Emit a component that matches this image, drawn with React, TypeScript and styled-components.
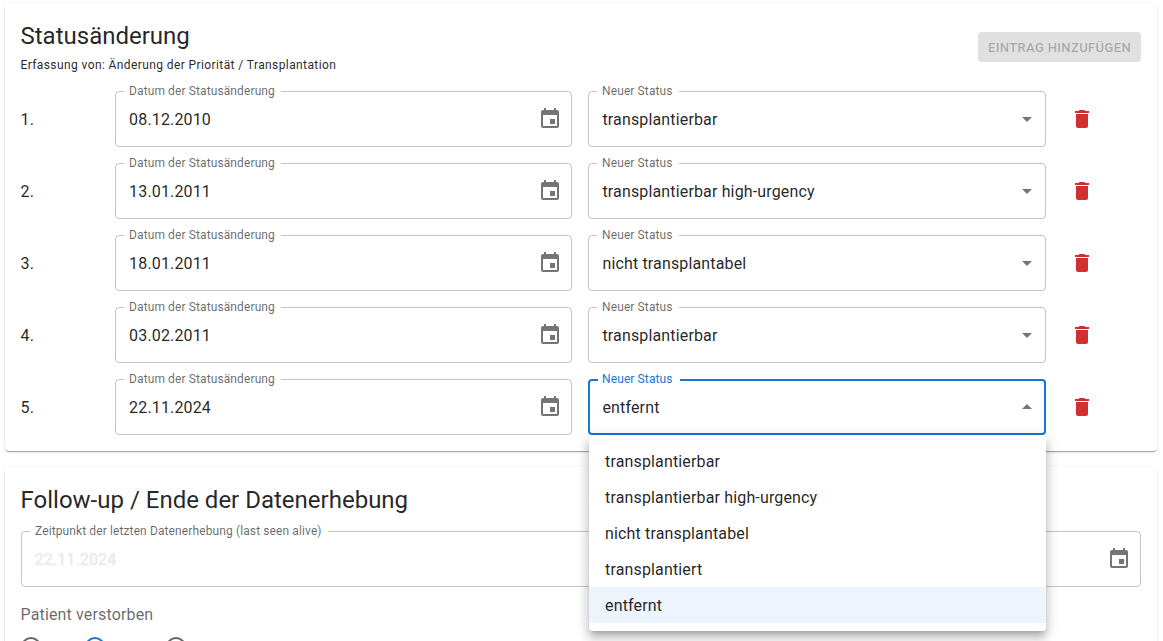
import React from "react";
import styled, { createGlobalStyle } from "styled-components";

const GlobalStyle = createGlobalStyle`
  *, *::before, *::after { box-sizing: border-box; }
  html { overflow: hidden; }
  body {
    margin: 0;
    background: #fff;
    color: rgba(0, 0, 0, 0.87);
    font-family: Roboto, "Liberation Sans", sans-serif;
    font-size: 16px;
  }
`;

const Page = styled.main`
  display: flex;
  flex-direction: column;
  gap: 16px;
  height: 641px;
  padding: 3px 6px 0 4.5px;
  overflow: hidden;
`;

const Card = styled.section`
  flex: none;
  padding: 16px;
  border-radius: 4px;
  background: #fff;
  box-shadow: 0 2px 1px -1px rgba(0, 0, 0, 0.2), 0 1px 1px 0 rgba(0, 0, 0, 0.14),
    0 1px 3px 0 rgba(0, 0, 0, 0.12);
`;

const CardHeader = styled.header`
  display: flex;
  align-items: center;
  justify-content: space-between;
  height: 56px;
  margin-bottom: 16px;
`;

const Title = styled.h2`
  height: 32px;
  margin: 0;
  font-size: 24px;
  font-weight: 400;
  line-height: 34px;
`;

const Caption = styled.span`
  display: block;
  margin-top: 4px;
  font-size: 12px;
  line-height: 20px;
  letter-spacing: 0.4px;
`;

const AddButton = styled.button`
  height: 30px;
  padding: 0 10px;
  border: 0;
  border-radius: 4px;
  background: rgba(0, 0, 0, 0.12);
  color: rgba(0, 0, 0, 0.26);
  font: 500 13px/32px Roboto, "Liberation Sans", sans-serif;
  letter-spacing: 0.3714px;
  text-transform: uppercase;
`;

const EntryList = styled.div`
  display: flex;
  flex-direction: column;
  gap: 16px;
`;

const Entry = styled.div`
  display: grid;
  grid-template-columns: 78.6px 457.35px 457.3px 1fr;
  column-gap: 16px;
  align-items: center;
  height: 56px;
`;

const EntryNumber = styled.span`
  height: 24px;
  line-height: 26px;
  letter-spacing: 0.15px;
`;

const DeleteButton = styled.button`
  display: flex;
  width: 40px;
  padding: 8px;
  border: 0;
  background: none;
  color: #d32f2f;
`;

const Icon = styled.svg`
  flex: none;
  width: 24px;
  height: 24px;
  fill: currentColor;
`;

const FieldRoot = styled.div<{ $icon: "date" | "select" }>`
  position: relative;
  display: flex;
  align-items: center;
  justify-content: space-between;
  height: 56px;
  padding: 0 ${(p) => (p.$icon === "date" ? "10px" : "7px")} 0 14px;

  > svg {
    color: rgba(0, 0, 0, 0.54);
  }
`;

const Value = styled.span<{ $disabled?: boolean }>`
  line-height: 23px;
  letter-spacing: 0.15px;
  color: ${(p) => (p.$disabled ? "#ebebeb" : "inherit")};
  -webkit-text-stroke: ${(p) => (p.$disabled ? "0.5px #ebebeb" : "0")};
`;

const FieldLabel = styled.label<{ $focused?: boolean }>`
  position: absolute;
  top: 0;
  left: 0;
  color: ${(p) => (p.$focused ? "#1976d2" : "rgba(0, 0, 0, 0.6)")};
  line-height: 23px;
  letter-spacing: 0.15px;
  white-space: nowrap;
  transform: translate(14px, -9px) scale(0.75);
  transform-origin: top left;
`;

const Outline = styled.fieldset<{ $focused?: boolean }>`
  position: absolute;
  inset: -5px 0 0;
  min-width: 0;
  margin: 0;
  padding: 0 8px;
  border: ${(p) => (p.$focused ? "2px solid #1976d2" : "1px solid rgba(0, 0, 0, 0.23)")};
  border-radius: 4px;
  pointer-events: none;
`;

const Notch = styled.legend`
  height: 11px;
  padding: 0 5px;
  font-size: 12px;
  letter-spacing: 0.15px;
  white-space: nowrap;
  visibility: hidden;
`;

const Menu = styled.ul`
  position: absolute;
  z-index: 1;
  top: 56px;
  left: 0.6px;
  width: 457.4px;
  margin: 0;
  padding: 8px 0;
  border-radius: 4px;
  background: #fff;
  list-style: none;
  box-shadow: 0 5px 5px -3px rgba(0, 0, 0, 0.2), 0 8px 10px 1px rgba(0, 0, 0, 0.14),
    0 3px 14px 2px rgba(0, 0, 0, 0.12);
`;

const MenuItem = styled.li<{ $selected: boolean }>`
  height: 36px;
  padding: 6px 16px;
  background: ${(p) => (p.$selected ? "rgba(25, 118, 210, 0.08)" : "transparent")};
  line-height: 26px;
  letter-spacing: 0.15px;
`;

const FollowUpTitle = styled(Title)`
  margin-bottom: 16px;
`;

const GroupLabel = styled.div`
  margin-top: 16px;
  color: rgba(0, 0, 0, 0.6);
  line-height: 23px;
  letter-spacing: 0.15px;
`;

const RadioRow = styled.div`
  display: grid;
  grid-template-columns: 64px 81px 20px;
  height: 42px;
  padding-top: 11px;
`;

const Radio = styled.span<{ $checked?: boolean }>`
  display: flex;
  align-items: center;
  justify-content: center;
  width: 20px;
  height: 20px;
  border: 2px solid ${(p) => (p.$checked ? "#1976d2" : "rgba(0, 0, 0, 0.6)")};
  border-radius: 50%;

  &::after {
    content: "";
    width: 10px;
    height: 10px;
    border-radius: 50%;
    background: ${(p) => (p.$checked ? "#1976d2" : "transparent")};
  }
`;

const CalendarIcon = () => (
  <Icon viewBox="0 0 24 24">
    <path d="M17 12h-5v5h5v-5zM16 1v2H8V1H6v2H5c-1.11 0-1.99.9-1.99 2L3 19c0 1.1.89 2 2 2h14c1.1 0 2-.9 2-2V5c0-1.1-.9-2-2-2h-1V1h-2zm3 18H5V8h14v11z" />
  </Icon>
);

const TrashIcon = () => (
  <Icon viewBox="0 0 24 24">
    <path d="M6 19c0 1.1.9 2 2 2h8c1.1 0 2-.9 2-2V7H6v12zM19 4h-3.5l-1-1h-5l-1 1H5v2h14V4z" />
  </Icon>
);

const ArrowIcon = ({ up }: { up?: boolean }) => (
  <Icon viewBox="0 0 24 24">
    <path d={up ? "M7 14l5-5 5 5z" : "M7 10l5 5 5-5z"} />
  </Icon>
);

interface FieldProps {
  label: string;
  value: string;
  icon: "date" | "select";
  open?: boolean;
  disabled?: boolean;
  children?: React.ReactNode;
}

const Field = ({ label, value, icon, open, disabled, children }: FieldProps) => (
  <FieldRoot $icon={icon}>
    <FieldLabel $focused={open}>{label}</FieldLabel>
    <Value $disabled={disabled}>{value}</Value>
    {icon === "date" ? <CalendarIcon /> : <ArrowIcon up={open} />}
    <Outline $focused={open} aria-hidden>
      <Notch>{label}</Notch>
    </Outline>
    {children}
  </FieldRoot>
);

const options = [
  "transplantierbar",
  "transplantierbar high-urgency",
  "nicht transplantabel",
  "transplantiert",
  "entfernt",
];

const entries = [
  { date: "08.12.2010", status: options[0] },
  { date: "13.01.2011", status: options[1] },
  { date: "18.01.2011", status: options[2] },
  { date: "03.02.2011", status: options[0] },
  { date: "22.11.2024", status: options[4], open: true },
];

export default function App() {
  return (
    <>
      <GlobalStyle />
      <Page>
        <Card>
          <CardHeader>
            <div>
              <Title>Statusänderung</Title>
              <Caption>Erfassung von: Änderung der Priorität / Transplantation</Caption>
            </div>
            <AddButton disabled>Eintrag hinzufügen</AddButton>
          </CardHeader>
          <EntryList>
            {entries.map((entry, i) => (
              <Entry key={i}>
                <EntryNumber>{i + 1}.</EntryNumber>
                <Field label="Datum der Statusänderung" value={entry.date} icon="date" />
                <Field label="Neuer Status" value={entry.status} icon="select" open={entry.open}>
                  {entry.open && (
                    <Menu>
                      {options.map((option) => (
                        <MenuItem key={option} $selected={option === entry.status}>
                          {option}
                        </MenuItem>
                      ))}
                    </Menu>
                  )}
                </Field>
                <DeleteButton aria-label="Eintrag löschen">
                  <TrashIcon />
                </DeleteButton>
              </Entry>
            ))}
          </EntryList>
        </Card>
        <Card>
          <FollowUpTitle>Follow-up / Ende der Datenerhebung</FollowUpTitle>
          <Field
            label="Zeitpunkt der letzten Datenerhebung (last seen alive)"
            value="22.11.2024"
            icon="date"
            disabled
          />
          <GroupLabel>Patient verstorben</GroupLabel>
          <RadioRow>
            <Radio />
            <Radio $checked />
            <Radio />
          </RadioRow>
        </Card>
      </Page>
    </>
  );
}
